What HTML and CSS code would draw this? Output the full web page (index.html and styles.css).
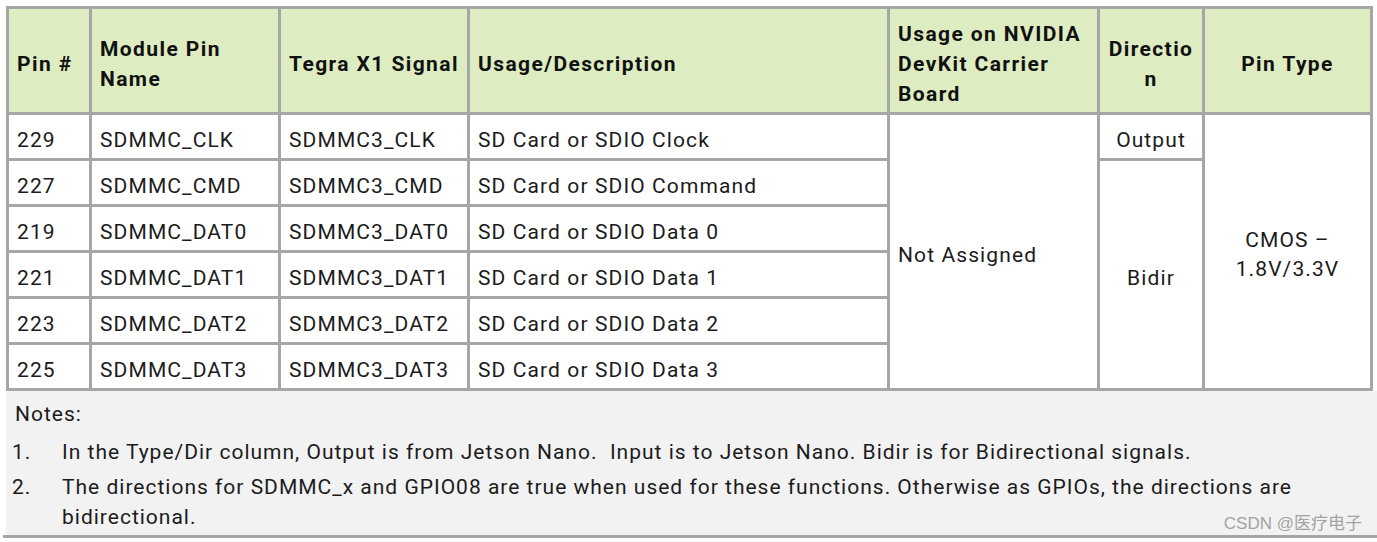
FILE: index.html
```html
<!DOCTYPE html>
<html>
<head>
<meta charset="utf-8">
<link rel="stylesheet" href="styles.css">
</head>
<body>
<div class="page">
  <table class="pins">
    <colgroup>
      <col class="c1"><col class="c2"><col class="c3"><col class="c4"><col class="c5"><col class="c6"><col class="c7">
    </colgroup>
    <thead>
      <tr>
        <th>Pin #</th>
        <th>Module Pin<br>Name</th>
        <th>Tegra X1 Signal</th>
        <th>Usage/Description</th>
        <th>Usage on NVIDIA<br>DevKit Carrier<br>Board</th>
        <th class="center tight">Directio<br>n</th>
        <th class="center">Pin Type</th>
      </tr>
    </thead>
    <tbody>
      <tr>
        <td>229</td><td>SDMMC_CLK</td><td>SDMMC3_CLK</td><td>SD Card or SDIO Clock</td>
        <td rowspan="6" class="na">Not Assigned</td>
        <td class="center">Output</td>
        <td rowspan="6" class="center type">CMOS –<br>1.8V/3.3V</td>
      </tr>
      <tr>
        <td>227</td><td>SDMMC_CMD</td><td>SDMMC3_CMD</td><td>SD Card or SDIO Command</td>
        <td rowspan="5" class="center">Bidir</td>
      </tr>
      <tr><td>219</td><td>SDMMC_DAT0</td><td>SDMMC3_DAT0</td><td>SD Card or SDIO Data 0</td></tr>
      <tr><td>221</td><td>SDMMC_DAT1</td><td>SDMMC3_DAT1</td><td>SD Card or SDIO Data 1</td></tr>
      <tr><td>223</td><td>SDMMC_DAT2</td><td>SDMMC3_DAT2</td><td>SD Card or SDIO Data 2</td></tr>
      <tr><td>225</td><td>SDMMC_DAT3</td><td>SDMMC3_DAT3</td><td>SD Card or SDIO Data 3</td></tr>
    </tbody>
  </table>
  <div class="notes">
    <div class="notes-inner">
      <div class="notes-title">Notes:</div>
      <div class="note"><span class="num">1.</span><span class="txt">In the Type/Dir column, Output is from Jetson Nano.&nbsp; Input is to Jetson Nano. Bidir is for Bidirectional signals.</span></div>
      <div class="note note-last"><span class="num">2.</span><span class="txt">The directions for SDMMC_x and GPIO08 are true when used for these functions. Otherwise as GPIOs, the directions are bidirectional.</span></div>
      <div class="mark">CSDN @医疗电子</div>
    </div>
  </div>
</div>
</body>
</html>
```

FILE: styles.css
```css
html, body {
  margin: 0;
  padding: 0;
  background: #ffffff;
}
body {
  font-family: Roboto, "Noto Sans", sans-serif;
  color: #1b1b1b;
  width: 1377px;
  height: 542px;
  overflow: hidden;
}
.page {
  padding-top: 6px;
}
.pins {
  border-collapse: collapse;
  table-layout: fixed;
  width: 1367px;
  margin-left: 6px;
  border: 3px solid #a6a6a6;
  font-size: 21px;
  letter-spacing: 1.1px;
}
.c1 { width: 83px; }
.c2 { width: 189px; }
.c3 { width: 189px; }
.c4 { width: 420px; }
.c5 { width: 210px; }
.c6 { width: 105px; }
.c7 { width: 168px; }
.pins th, .pins td {
  border: 3px solid #a6a6a6;
  padding: 6px 8px 0;
  text-align: left;
  vertical-align: middle;
  white-space: nowrap;
}
.pins th {
  background: #deedc1;
  font-weight: 700;
  color: #111;
  height: 97px;
  line-height: 30px;
  letter-spacing: 1.4px;
}
.pins th.tight {
  padding-left: 2px;
  padding-right: 2px;
}
.pins td {
  height: 37px;
  line-height: 24px;
  font-weight: 400;
}
.pins .center { text-align: center; }
.pins .type { line-height: 29px; }
.notes {
  margin-left: 3px;
  border-bottom: 3px solid #a6a6a6;
}
.notes-inner {
  margin-left: 3px;
  background: #f2f2f2;
  padding: 8px 0 3px 9px;
  font-size: 21px;
  letter-spacing: 1px;
  position: relative;
}
.notes-title {
  line-height: 30px;
  margin-bottom: 8px;
}
.note {
  display: flex;
  line-height: 30px;
  margin-bottom: 5px;
}
.note.note-last {
  margin-bottom: 0;
}
.num {
  width: 50px;
  flex: none;
  margin-left: -3px;
}
.txt {
  flex: 1;
  padding-right: 60px;
}
.mark {
  position: absolute;
  right: 15px;
  bottom: 1px;
  font-family: "Liberation Sans", "Noto Sans CJK SC", sans-serif;
  font-size: 17px;
  line-height: 20px;
  color: #a3a3a3;
  letter-spacing: 0;
}
```
